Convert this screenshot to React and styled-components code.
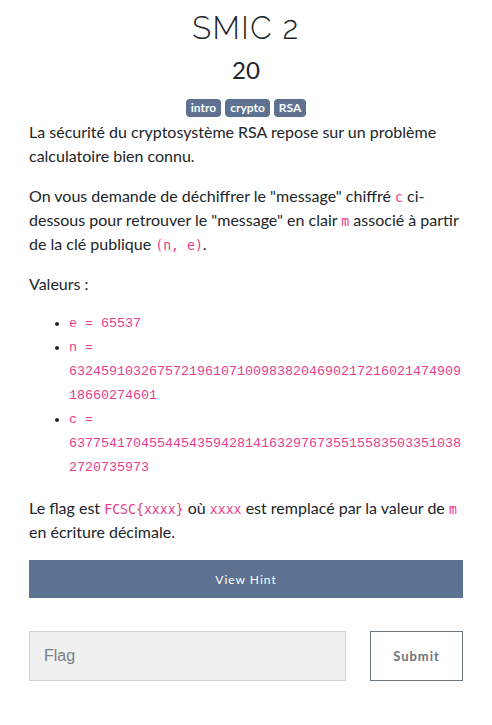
import styled, { createGlobalStyle } from "styled-components";

const Global = createGlobalStyle`
  body {
    margin: 0;
    background: #fff;
    font-family: Lato, "Noto Sans", sans-serif;
    color: #212529;
  }
`;

const Page = styled.div`
  padding: 0 29px;
`;

const Header = styled.div`
  text-align: center;
`;

const Title = styled.h2`
  margin: 8px 0 0;
  font-family: Raleway, Lato, sans-serif;
  font-weight: 300;
  font-size: 31px;
  line-height: 40px;
  letter-spacing: 1.5px;
`;

const Score = styled.h3`
  margin: 6px 0 0;
  font-weight: 400;
  font-size: 24px;
  line-height: 32px;
`;

const Tags = styled.div`
  display: flex;
  justify-content: center;
  gap: 4px;
  margin-top: 13px;
`;

const Tag = styled.span`
  background: #5c7290;
  color: #fff;
  font-size: 12px;
  font-weight: 700;
  line-height: 18px;
  padding: 0 5px;
  border-radius: 4px;
`;

const Body = styled.div`
  margin-top: 3px;
  font-size: 16px;
  line-height: 24px;
`;

const P = styled.p`
  margin: ${(p) => (p.$first ? "0" : "16px")} 0 0;
`;

const Code = styled.code`
  font-family: "DejaVu Sans Mono", monospace;
  font-size: 13.2px;
  line-height: 1;
  color: #e83e8c;
`;

const List = styled.ul`
  margin: 16px 0 0;
  padding-left: 40px;
`;

const Item = styled.li`
  font-family: "Liberation Mono", monospace;
  font-size: 13.33px;
  line-height: 24px;
  color: #e83e8c;
  overflow-wrap: anywhere;
  &::marker {
    color: #212529;
  }
`;

const HintButton = styled.button`
  display: block;
  width: 100%;
  height: 38px;
  margin-top: 16px;
  border: none;
  background: #5d7290;
  color: #fff;
  font-family: Lato, sans-serif;
  font-size: 12px;
  letter-spacing: 1px;
`;

const FlagRow = styled.form`
  display: flex;
  gap: 24px;
  margin-top: 33px;
`;

const FlagInput = styled.input`
  flex: 1;
  height: 50px;
  box-sizing: border-box;
  border: 1px solid #ced4da;
  background: #f0f0f0;
  padding: 0 14px;
  font-family: "Liberation Sans", Arial, sans-serif;
  font-size: 16px;
  &::placeholder {
    color: #7a7f85;
  }
`;

const SubmitButton = styled.button`
  width: 93px;
  height: 50px;
  box-sizing: border-box;
  background: #fff;
  border: 1px solid #6c757d;
  color: #6c757d;
  font-family: Lato, sans-serif;
  font-weight: 700;
  font-size: 13px;
  letter-spacing: 1px;
`;

export default function App() {
  return (
    <Page>
      <Global />
      <Header>
        <Title>SMIC 2</Title>
        <Score>20</Score>
        <Tags>
          <Tag>intro</Tag>
          <Tag>crypto</Tag>
          <Tag>RSA</Tag>
        </Tags>
      </Header>
      <Body>
        <P $first>
          La sécurité du cryptosystème RSA repose sur un problème calculatoire
          bien connu.
        </P>
        <P>
          On vous demande de déchiffrer le "message" chiffré <Code>c</Code>{" "}
          ci-dessous pour retrouver le "message" en clair <Code>m</Code> associé
          à partir de la clé publique <Code>(n, e)</Code>.
        </P>
        <P>Valeurs :</P>
        <List>
          <Item>e = 65537</Item>
          <Item>
            n = 632459103267572196107100983820469021721602147490918660274601
          </Item>
          <Item>
            c = 63775417045544543594281416329767355155835033510382720735973
          </Item>
        </List>
        <P>
          Le flag est <Code>FCSC{"{xxxx}"}</Code> où <Code>xxxx</Code> est
          remplacé par la valeur de <Code>m</Code> en écriture décimale.
        </P>
      </Body>
      <HintButton type="button">View Hint</HintButton>
      <FlagRow onSubmit={(e) => e.preventDefault()}>
        <FlagInput placeholder="Flag" />
        <SubmitButton type="submit">Submit</SubmitButton>
      </FlagRow>
    </Page>
  );
}
